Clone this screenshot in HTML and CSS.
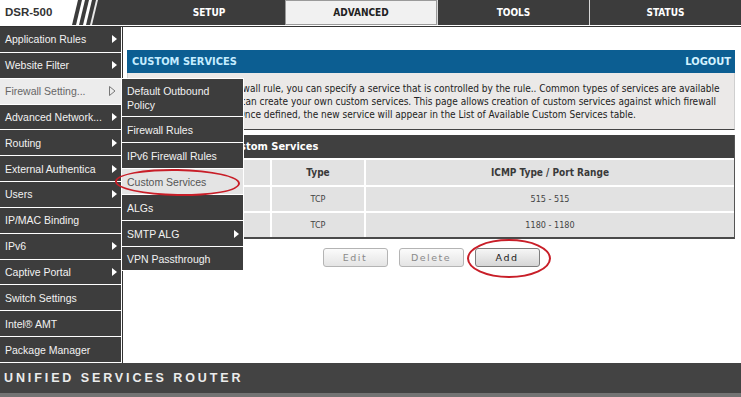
FILE: index.html
```html
<!DOCTYPE html>
<html lang="en">
<head>
    <meta charset="UTF-8">
    <meta name="viewport" content="width=device-width, initial-scale=1.0">
    <title>DSR-500 - Custom Services</title>
    <link rel="stylesheet" href="styles.css">
</head>
<body>
    <div class="topbar">
        <div class="logo">
            <span class="logo-text">DSR-500</span>
            <svg class="logo-slash" width="28" height="25" viewBox="0 0 28 25">
                <polygon points="0,0 6,0 0,25" fill="#fff"/>
                <polygon points="10,0 13,0 7,25 4,25" fill="#fff"/>
                <polygon points="17,0 20,0 14,25 11,25" fill="#fff"/>
                <polygon points="24,0 26,0 20,25 18,25" fill="#e8e8e8"/>
            </svg>
        </div>
        <a class="tab first">SETUP</a>
        <a class="tab active">ADVANCED</a>
        <a class="tab">TOOLS</a>
        <a class="tab last">STATUS</a>
    </div>

    <div class="layout">
        <ul class="side-menu">
            <li class="sub">Application Rules</li>
            <li class="sub">Website Filter</li>
            <li class="open">Firewall Setting...
                <svg width="7" height="10" viewBox="0 0 7 10"><polygon points="0.5,0.5 6,5 0.5,9.5" fill="none" stroke="#777" stroke-width="1"/></svg>
            </li>
            <li class="sub">Advanced Network...</li>
            <li class="sub">Routing</li>
            <li class="sub">External Authentica</li>
            <li class="sub">Users</li>
            <li>IP/MAC Binding</li>
            <li class="sub">IPv6</li>
            <li class="sub">Captive Portal</li>
            <li>Switch Settings</li>
            <li>Intel&reg; AMT</li>
            <li>Package Manager</li>
        </ul>

        <div class="main">
            <div class="panel">
                <div class="panel-head">
                    <span>CUSTOM SERVICES</span>
                    <a class="logout">LOGOUT</a>
                </div>
                <p class="desc">
                    When you create a firewall rule, you can specify a service that is controlled by the rule.. Common types of services are available<br>
                    for selection, and you can create your own custom services. This page allows creation of custom services against which firewall<br>
                    rules can be defined. Once defined, the new service will appear in the List of Available Custom Services table.
                </p>
            </div>

            <div class="list">
                <div class="list-head">List of Available Custom Services</div>
                <table class="services">
                    <tr>
                        <th class="col-name">Name</th>
                        <th class="col-type">Type</th>
                        <th>ICMP Type / Port Range</th>
                    </tr>
                    <tr>
                        <td>LPD</td>
                        <td>TCP</td>
                        <td>515 - 515</td>
                    </tr>
                    <tr>
                        <td>Custom1</td>
                        <td>TCP</td>
                        <td>1180 - 1180</td>
                    </tr>
                </table>
            </div>

            <div class="buttons">
                <button class="btn" disabled>Edit</button>
                <button class="btn" disabled>Delete</button>
                <button class="btn btn-add">Add</button>
            </div>
        </div>

        <ul class="flyout">
            <li class="two-line">Default Outbound<br>Policy</li>
            <li>Firewall Rules</li>
            <li>IPv6 Firewall Rules</li>
            <li class="current">Custom Services</li>
            <li>ALGs</li>
            <li class="sub">SMTP ALG</li>
            <li class="last">VPN Passthrough</li>
        </ul>

        <div class="mark mark-menu"></div>
        <div class="mark mark-add"></div>
    </div>

    <div class="footer">UNIFIED SERVICES ROUTER</div>
</body>
</html>
```

FILE: styles.css
```css
body {
    margin: 0;
    width: 741px;
    height: 397px;
    overflow: hidden;
    background-color: #fff;
    font-family: "Liberation Sans", Arial, sans-serif;
}

ul {
    list-style: none;
    margin: 0;
    padding: 0;
}

/* top navigation */
.topbar {
    display: flex;
    height: 25px;
    background-color: #3c3c3c;
    border-bottom: 1px solid #fff;
}

.logo {
    width: 133px;
    display: flex;
}

.logo-text {
    width: 67px;
    padding-left: 5px;
    background-color: #fff;
    color: #333;
    font-weight: bold;
    font-size: 11.5px;
    line-height: 25px;
}

.tab {
    box-sizing: border-box;
    width: 152px;
    color: #fff;
    text-align: center;
    font-family: "DejaVu Sans Condensed", "DejaVu Sans", sans-serif;
    font-stretch: condensed;
    font-weight: bold;
    font-size: 10px;
    line-height: 25px;
    border-left: 1px solid #d8d8d8;
}

.tab.first {
    border-left: none;
}

.tab.active {
    width: 152px;
    background-color: #f1f1f1;
    color: #222;
    border: 1px solid #9a9a9a;
    line-height: 23px;
}

.tab.last {
    flex: 1;
}

/* page body */
.layout {
    position: relative;
    display: flex;
    height: 336px;
    border-top: 1px solid #333;
}

.side-menu {
    width: 121px;
    display: flex;
    flex-direction: column;
    gap: 1px;
    padding: 0 1px 1px 0;
    background-color: #fff;
    border-right: 1px solid #333;
}

.side-menu li,
.flyout li {
    display: flex;
    align-items: center;
    justify-content: space-between;
    padding: 0 4px 0 5px;
    background-color: #3d3d3d;
    color: #f2f2f2;
    font-size: 10.5px;
    white-space: nowrap;
}

.side-menu li {
    flex: 1;
}

.side-menu li.sub::after,
.flyout li.sub::after {
    content: "";
    border-left: 5px solid #fff;
    border-top: 4px solid transparent;
    border-bottom: 4px solid transparent;
}

.side-menu li.open {
    background-color: #ececec;
    color: #666;
}

.side-menu li.open svg {
    margin-right: 1px;
}

.main {
    flex: 1;
    padding: 23px 6px 0 4px;
    font-family: "DejaVu Sans Condensed", "DejaVu Sans", sans-serif;
    font-stretch: condensed;
}

.panel-head {
    display: flex;
    justify-content: space-between;
    align-items: center;
    height: 23px;
    padding: 0 4px 0 5px;
    background-color: #0c5e92;
    color: #c4ecff;
    font-weight: bold;
    font-size: 11px;
}

.logout {
    color: #d4f2ff;
}

.desc {
    margin: 0;
    padding: 9px 6px 8px 12px;
    background-color: #ebe9e8;
    border: 1px solid #cfcfcf;
    border-top: none;
    border-bottom: 1px solid #444;
    color: #222;
    font-size: 10px;
    line-height: 13px;
    white-space: nowrap;
}

.list {
    margin-top: 5px;
    border-right: 1px solid #555;
    border-bottom: 2px solid #4a4a4a;
}

.list-head {
    height: 23px;
    line-height: 23px;
    padding-left: 6px;
    background-color: #404040;
    color: #fff;
    font-weight: bold;
    font-size: 11px;
}

.services {
    width: 100%;
    border-spacing: 0;
    table-layout: fixed;
}

.services th,
.services td {
    box-sizing: border-box;
    background-color: #e2e2e2;
    border-top: 2px solid #fff;
    border-left: 2px solid #fff;
    text-align: center;
    color: #444;
}

.services th {
    height: 27px;
    font-size: 10px;
    color: #3a3a3a;
}

.services td {
    height: 26px;
    font-size: 9px;
}

.services .col-name {
    width: 143px;
}

.services .col-type {
    width: 94px;
}

.buttons {
    display: flex;
    justify-content: center;
    gap: 11px;
    margin-top: 9px;
}

.btn {
    width: 65px;
    height: 19px;
    padding: 0;
    border: 1px solid #b4b4b4;
    border-radius: 3px;
    background: linear-gradient(#fbfbfb, #e4e4e4);
    color: #8a8a8a;
    font-family: "DejaVu Sans", sans-serif;
    font-size: 9.5px;
    letter-spacing: 1.5px;
}

.btn-add {
    border-color: #7d7d7d;
    background: linear-gradient(#f6f6f6, #d6d6d6);
    color: #222;
}

/* flyout submenu */
.flyout {
    position: absolute;
    left: 121px;
    top: 51px;
    width: 121px;
    display: flex;
    flex-direction: column;
    gap: 1px;
    padding: 1px;
    background-color: #fff;
}

.flyout li {
    height: 25px;
    padding-left: 5px;
}

.flyout li.two-line {
    height: 37px;
    line-height: 14px;
}

.flyout li.last {
    height: 23px;
}

.flyout li.current {
    background-color: #e4e4e4;
    color: #555;
}

/* red annotation rings */
.mark {
    position: absolute;
    border: 2px solid #c81e28;
    border-radius: 50%;
}

.mark-menu {
    left: 115px;
    top: 142px;
    width: 121px;
    height: 23px;
    transform: rotate(1deg);
}

.mark-add {
    left: 467px;
    top: 212px;
    width: 80px;
    height: 35px;
}

.footer {
    height: 30px;
    padding-left: 4px;
    background-color: #434343;
    border-bottom: 4px solid #737373;
    color: #ececec;
    font-weight: bold;
    font-size: 12.5px;
    letter-spacing: 2.9px;
    line-height: 30px;
}
```
